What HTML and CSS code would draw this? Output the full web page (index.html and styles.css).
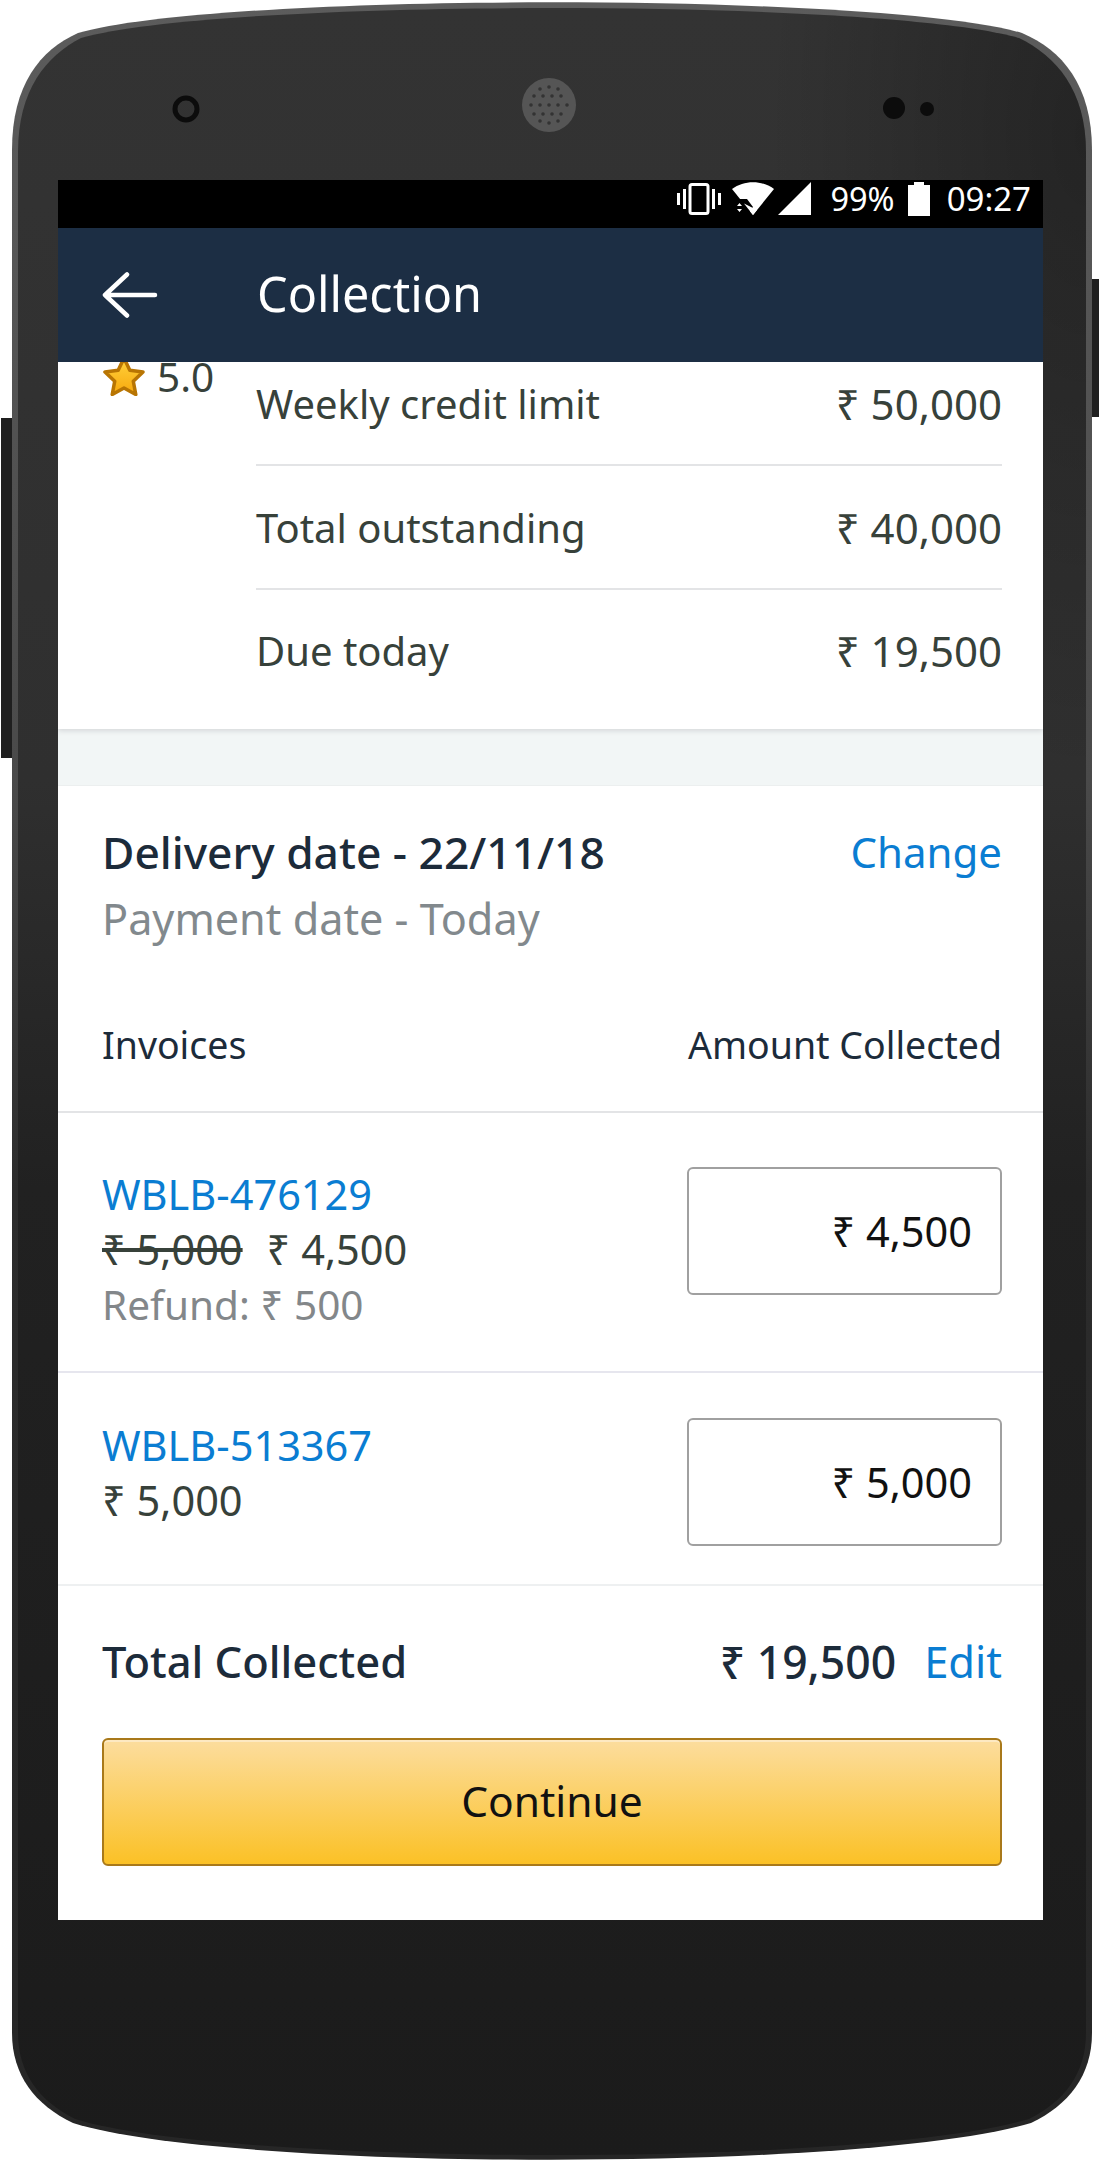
FILE: index.html
```html
<!DOCTYPE html>
<html><head>
<title>Collection</title>
<link rel="stylesheet" href="styles.css">
</head><body>

<div class="phone">
  <svg class="shell" width="1100" height="2160" viewBox="0 0 1100 2160">
    <defs>
      <linearGradient id="bodyFill" x1="0" y1="0" x2="0" y2="1">
        <stop offset="0" stop-color="#333333"/>
        <stop offset="0.36" stop-color="#2f2f2f"/>
        <stop offset="0.55" stop-color="#212121"/>
        <stop offset="1" stop-color="#1b1b1b"/>
      </linearGradient>
      <linearGradient id="rimFill" x1="0" y1="0" x2="0" y2="1">
        <stop offset="0" stop-color="#5c5c5c"/>
        <stop offset="0.36" stop-color="#4a4a4a"/>
        <stop offset="0.55" stop-color="#2c2c2c"/>
        <stop offset="1" stop-color="#262626"/>
      </linearGradient>
      <radialGradient id="cornerShade" cx="1" cy="0.06" r="0.3">
        <stop offset="0" stop-color="#000" stop-opacity="0.28"/>
        <stop offset="1" stop-color="#000" stop-opacity="0"/>
      </radialGradient>
    </defs>
    <rect x="1" y="418" width="12" height="340" fill="#1f1f1f"/>
    <rect x="1091" y="279" width="8" height="138" fill="#1f1f1f"/>
    <path fill="url(#rimFill)" d="M12 150 C12 85 40 50 78 33 C220 -8 880 -8 1022 33 C1062 50 1092 85 1092 150 L1092 2033 C1092 2075 1069 2105 1031 2123 C870 2172 230 2172 73 2123 C35 2105 12 2075 12 2033 Z"/>
    <path fill="url(#bodyFill)" d="M18 152 C18 90 46 56 81 38 C220 -2 880 -2 1019 38 C1056 56 1086 90 1086 152 L1086 2033 C1086 2073 1065 2101 1029 2119 C870 2167 230 2167 75 2119 C39 2101 18 2073 18 2033 Z"/>
    <path fill="url(#cornerShade)" d="M18 152 C18 90 46 56 81 38 C220 -2 880 -2 1019 38 C1056 56 1086 90 1086 152 L1086 2033 C1086 2073 1065 2101 1029 2119 C870 2167 230 2167 75 2119 C39 2101 18 2073 18 2033 Z"/>
    <circle cx="186" cy="109" r="11" fill="none" stroke="#0c0c0c" stroke-width="5"/>
    <circle cx="549" cy="105" r="27" fill="#555"/>
    <g fill="#333">
      <circle cx="549" cy="87" r="1.8"/><circle cx="540" cy="89" r="1.8"/><circle cx="558" cy="89" r="1.8"/>
      <circle cx="534" cy="96" r="1.8"/><circle cx="543" cy="96" r="1.8"/><circle cx="552" cy="96" r="1.8"/><circle cx="561" cy="96" r="1.8"/>
      <circle cx="531" cy="105" r="1.8"/><circle cx="540" cy="105" r="1.8"/><circle cx="549" cy="105" r="1.8"/><circle cx="558" cy="105" r="1.8"/><circle cx="567" cy="105" r="1.8"/>
      <circle cx="534" cy="114" r="1.8"/><circle cx="543" cy="114" r="1.8"/><circle cx="552" cy="114" r="1.8"/><circle cx="561" cy="114" r="1.8"/>
      <circle cx="540" cy="121" r="1.8"/><circle cx="549" cy="123" r="1.8"/><circle cx="558" cy="121" r="1.8"/>
    </g>
    <circle cx="894" cy="108" r="11" fill="#0c0c0c"/>
    <circle cx="927" cy="109" r="7" fill="#0c0c0c"/>
  </svg>

  <div class="screen">
    <div class="statusbar">
      <svg class="ic-vibrate" width="44" height="32" viewBox="0 0 44 32">
        <path fill="#fff" d="M0 10h3v12H0zM6 6h3v20H6zM35 6h3v20h-3zM41 10h3v12h-3z"/>
        <rect x="13" y="1.5" width="18" height="29" rx="2" fill="none" stroke="#fff" stroke-width="3"/>
      </svg>
      <svg class="ic-wifi" width="42" height="33" viewBox="0 0 42 33">
        <path fill="#fff" d="M0 7C12 -2 30 -2 42 7L21 33Z"/>
        <path fill="#000" d="M0 17h15l6 8-6 8H0z"/>
        <path fill="#fff" d="M2 24l2.500-3 2.500 3zM2 27l2.500 3 2.500-3z" transform="translate(3 0)"/>
        <path fill="#fff" d="M12 21.600L21 33l4-5z" />
      </svg>
      <svg class="ic-signal" width="33" height="33" viewBox="0 0 33 33">
        <path fill="#fff" d="M33 0V33H0Z"/>
      </svg>
      <span class="status-pct">99%</span>
      <svg class="ic-battery" width="22" height="34" viewBox="0 0 22 34">
        <path fill="#fff" d="M6 0h10v3h6v31H0V3h6z"/>
      </svg>
      <span class="status-time">09:27</span>
    </div>

    <div class="appbar">
      <svg class="ic-back" width="56" height="46" viewBox="0 0 56 46">
        <path fill="none" stroke="#fff" stroke-width="4.500" stroke-linecap="round" stroke-linejoin="round" d="M53 23H4M25 2.500L3 23l22 20.500"/>
      </svg>
      <div class="appbar-title">Collection</div>
    </div>

    <div class="content">
      <div class="credit">
        <div class="rating">
          <svg width="44" height="40" viewBox="0 0 44 40">
            <defs>
              <linearGradient id="starFill" x1="0" y1="0" x2="0" y2="1">
                <stop offset="0" stop-color="#ffd23c"/>
                <stop offset="1" stop-color="#f7a80d"/>
              </linearGradient>
            </defs>
            <path fill="url(#starFill)" stroke="#b87503" stroke-width="3.500" stroke-linejoin="round" d="M22 2l5.800 12.300 13.200 1.700-9.700 9.300 2.500 13.200L22 32l-11.800 6.500 2.500-13.200L3 16l13.200-1.700z"/>
          </svg>
          <span>5.0</span>
        </div>
        <div class="credit-rows">
          <div class="credit-row"><span>Weekly credit limit</span><span class="credit-amount">₹ 50,000</span></div>
          <div class="credit-row"><span>Total outstanding</span><span class="credit-amount">₹ 40,000</span></div>
          <div class="credit-row"><span>Due today</span><span class="credit-amount">₹ 19,500</span></div>
        </div>
      </div>

      <div class="band"></div>

      <div class="dates">
        <div class="date-top">
          <span class="date-delivery">Delivery date - 22/11/18</span>
          <span class="link">Change</span>
        </div>
        <div class="date-payment">Payment date - Today</div>
      </div>

      <div class="table-head"><span>Invoices</span><span>Amount Collected</span></div>

      <div class="invoice invoice-first">
        <div class="invoice-info">
          <div class="link">WBLB-476129</div>
          <div class="invoice-amount"><s>₹ 5,000</s><span class="amount-new">₹ 4,500</span></div>
          <div class="invoice-refund">Refund: ₹ 500</div>
        </div>
        <div class="amount-box">₹ 4,500</div>
      </div>

      <div class="invoice invoice-second">
        <div class="invoice-info">
          <div class="link">WBLB-513367</div>
          <div class="invoice-amount">₹ 5,000</div>
        </div>
        <div class="amount-box">₹ 5,000</div>
      </div>

      <div class="total">
        <span class="total-label">Total Collected</span>
        <span class="total-amount">₹ 19,500</span>
        <span class="link">Edit</span>
      </div>

      <div class="continue"><span class="continue-label">Continue</span></div>
    </div>
  </div>
</div>

</body></html>
```

FILE: styles.css
```css
html, body {
  margin: 0;
  padding: 0;
  background: #fff;
  font-family: "Noto Sans", sans-serif;
  }
.phone {
  position: relative;
  width: 1100px;
  height: 2160px;
  padding: 180px 0 0 58px;
  box-sizing: border-box;
  overflow: hidden;
  }
.shell {
  position: absolute;
  top: 0;
  left: 0;
  }
.screen {
  position: relative;
  width: 985px;
  height: 1740px;
  display: flex;
  flex-direction: column;
  background: #fff;
  }

.statusbar {
  height: 48px;
  box-sizing: border-box;
  padding: 0 12px 11px 0;
  background: #000;
  color: #fff;
  display: flex;
  align-items: center;
  justify-content: flex-end;
  font-size: 32.5px;
  }
.ic-vibrate { margin-right: 11px; }
.ic-wifi { margin-right: 4px; }
.ic-signal { margin-right: 19px; }
.ic-battery { margin: 0 17px 0 13px; }
.status-time { font-size: 33px; }

.appbar {
  height: 134px;
  background: #1c2e44;
  display: flex;
  align-items: center;
  padding-left: 44px;
  }
.appbar-title {
  margin: 0 0 5px 99px;
  color: #fff;
  font-size: 48.5px;
  }

.content {
  flex: 1;
  overflow: hidden;
  }
.credit {
  display: flex;
  height: 367px;
  box-shadow: 0 2px 5px #d6d8da;
  position: relative;
  }
.rating {
  width: 198px;
  box-sizing: border-box;
  padding-left: 44px;
  margin-top: -8px;
  height: 44px;
  display: flex;
  align-items: center;
  gap: 11px;
  color: #37413a;
  font-size: 40.5px;
  }
.credit-rows {
  flex: 1;
  padding-right: 41px;
  margin-top: -20px;
  }
.credit-row {
  height: 124px;
  box-sizing: border-box;
  border-bottom: 2px solid #e3e4e6;
  display: flex;
  align-items: center;
  justify-content: space-between;
  color: #37413a;
  font-size: 40px;
  }
.credit-row:last-child {
  border-bottom: 0;
  margin-top: -2px;
  }
.credit-amount {
  font-size: 42px;
  }

.band {
  height: 57px;
  background: #f2f6f6;
  border-bottom: 1px solid #ecefef;
  box-sizing: border-box;
  }

.link {
  color: #0a7dd2;
  }
.dates {
  padding: 40px 41px 0 44px;
  font-size: 43.2px;
  }
.date-top {
  display: flex;
  justify-content: space-between;
  line-height: 52px;
  }
.date-top .link {
  font-size: 42px;
  }
.date-delivery {
  font-weight: 500;
  font-size: 44.3px;
  color: #1c2b3a;
  }
.date-payment {
  color: #82898d;
  line-height: 52px;
  margin-top: 15px;
  }

.table-head {
  margin-top: 63px;
  height: 73px;
  padding: 0 41px 30px 44px;
  border-bottom: 2px solid #e3e4e6;
  display: flex;
  justify-content: space-between;
  align-items: center;
  color: #1c2b3a;
  font-size: 37.5px;
  }

.invoice {
  display: flex;
  justify-content: space-between;
  align-items: flex-start;
  padding: 0 41px 0 44px;
  border-bottom: 2px solid #e6e6ee;
  box-sizing: border-box;
  }
.invoice-first {
  height: 260px;
  padding-top: 54px;
  }
.invoice-second {
  height: 213px;
  padding-top: 45px;
  border-bottom-color: #eef0f1;
  }
.invoice-info {
  font-size: 41.5px;
  line-height: 55px;
  color: #37413a;
  }
.invoice-amount s {
  margin-right: 24px;
  }
.invoice-refund {
  color: #83878a;
  font-size: 40.5px;
  }
.amount-box {
  width: 315px;
  height: 128px;
  box-sizing: border-box;
  border: 2px solid #a0a0a0;
  border-radius: 6px;
  display: flex;
  align-items: center;
  justify-content: flex-end;
  padding-right: 28px;
  color: #111;
  font-size: 41.5px;
  }
.total {
  height: 152px;
  box-sizing: border-box;
  padding: 0 41px 2px 44px;
  display: flex;
  align-items: center;
  font-size: 43.5px;
  }
.total-label {
  flex: 1;
  font-weight: 500;
  font-size: 43.5px;
  color: #1c2b3a;
  }
.total-amount {
  font-weight: 500;
  font-size: 44.5px;
  color: #1c2b3a;
  margin-right: 28px;
  }
.continue {
  margin: 0 41px 0 44px;
  height: 128px;
  box-sizing: border-box;
  border: 2px solid #a9791a;
  border-radius: 6px;
  background: linear-gradient(#fcdd9e, #fbc126);
  box-shadow: inset 0 2px 0 #fde9c2;
  display: flex;
  align-items: center;
  justify-content: center;
  color: #111;
  font-size: 42.5px;
  }
.continue-label {
  margin-bottom: 3px;
  }
```
